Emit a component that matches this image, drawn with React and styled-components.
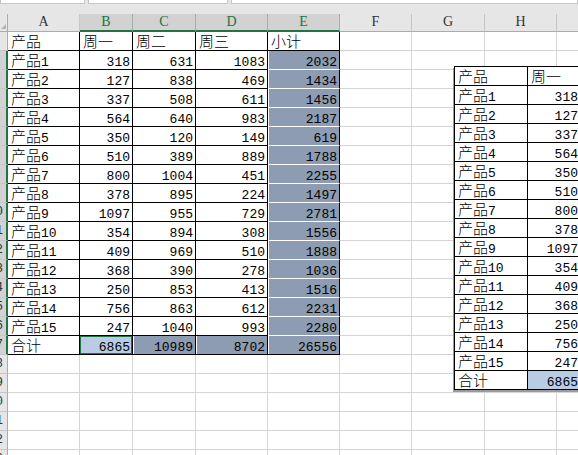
import React from 'react';
import styled, { createGlobalStyle, css } from 'styled-components';

const GREEN = '#217346';
const GRID = '#d4d4d4';
const SLATE = '#8d9cb2';
const LIGHT = '#b8cce4';

const Global = createGlobalStyle`
  html, body { margin: 0; padding: 0; background: #fff; overflow: hidden; }
  #root { width: 578px; height: 455px; }
`;

const Sheet = styled.div`
  position: relative;
  width: 578px;
  height: 455px;
  overflow: hidden;
  background: #fff;
  display: flex;
  flex-direction: column;
`;

const TopStrip = styled.div`
  height: 14px;
  flex: none;
  background: #e6e6e6;
  display: flex;
  align-items: flex-start;
  gap: 3px;
`;

const Box = styled.div`
  height: 4px;
  width: ${(p) => p.$w}px;
  flex: ${(p) => (p.$grow ? '1' : 'none')};
  background: #fff;
  border: 1px solid #c6c6c6;
  border-top: none;
  box-sizing: border-box;
`;

const Grid = styled.div`
  display: grid;
  grid-template-columns: 8px 72px 53px 63px 72px 72px 72px 73px 72px 72px;
  grid-template-rows: 18px repeat(23, 19px);
`;

const Corner = styled.div`
  background: #e6e6e6;
  border-right: 1px solid #ababab;
  border-bottom: 1px solid #ababab;
  box-sizing: border-box;
  display: flex;
  align-items: flex-end;
  justify-content: flex-end;
  padding: 0 1px 2px 0;
`;

const ColHead = styled.div`
  box-sizing: border-box;
  background: ${(p) => (p.$sel ? '#d2d2d2' : '#e6e6e6')};
  border-right: 1px solid ${(p) => (p.$sel ? '#9fb3a7' : '#c6c6c6')};
  border-bottom: ${(p) => (p.$sel ? `2px solid ${GREEN}` : '1px solid #ababab')};
  color: ${(p) => (p.$sel ? GREEN : '#333')};
  font-family: 'Liberation Serif', serif;
  font-size: 14px;
  line-height: 16px;
  display: flex;
  align-items: flex-end;
  justify-content: center;
  padding-bottom: ${(p) => (p.$sel ? 0 : 1)}px;
`;

const RowHead = styled.div`
  box-sizing: border-box;
  overflow: hidden;
  background: ${(p) => (p.$sel ? '#d2d2d2' : '#e6e6e6')};
  border-right: ${(p) => (p.$sel ? `2px solid ${GREEN}` : '1px solid #ababab')};
  border-bottom: 1px solid #c6c6c6;
  display: flex;
  align-items: flex-end;
`;

const RowNum = styled.span`
  flex: none;
  width: 25px;
  margin-left: -17px;
  text-align: center;
  font-family: 'Liberation Mono', monospace;
  font-size: 12.5px;
  line-height: 17px;
  color: #333;
`;

const Cell = styled.div`
  box-sizing: border-box;
  overflow: hidden;
  white-space: nowrap;
  display: flex;
  align-items: flex-end;
  justify-content: ${(p) => (p.$num ? 'flex-end' : 'flex-start')};
  padding: 0 2px 1px 3px;
  background: #fff;
  border-right: 1px solid ${(p) => (p.$table ? '#000' : GRID)};
  border-bottom: 1px solid ${(p) => (p.$joined ? '#fff' : p.$table ? '#000' : GRID)};
  color: #000;
  ${(p) =>
    p.$fill === 'slate' &&
    css`
      background: ${SLATE};
      box-shadow: inset 1px 0 0 #fff;
    `}
  ${(p) =>
    p.$fill === 'active' &&
    css`
      background: ${LIGHT};
      box-shadow: inset 0 0 0 1px ${GREEN};
    `}
  ${(p) =>
    p.$fill === 'light' &&
    css`
      background: ${LIGHT};
    `}
`;

const Content = styled.span`
  display: block;
  height: 16px;
  font-family: 'Noto Sans CJK SC', sans-serif;
  font-size: 15px;
  font-weight: 300;
  line-height: 16px;
`;

const Num = styled.span`
  font-family: 'Liberation Mono', monospace;
  font-size: 13px;
  font-weight: 400;
  line-height: 0;
`;

const Picture = styled.div`
  position: absolute;
  left: 454px;
  top: 66px;
  box-shadow: -1px 2px 0 #9a9a9a;
`;

const PicGrid = styled.div`
  display: grid;
  grid-template-columns: 73px 53px;
  grid-template-rows: repeat(17, 19px);
  border-top: 1px solid #000;
  border-left: 1px solid #000;
  background: #fff;
`;

const Label = ({ text }) => {
  const parts = String(text).split(/(\d+)/).filter(Boolean);
  return (
    <Content>
      {parts.map((p, i) => (/^\d+$/.test(p) ? <Num key={i}>{p}</Num> : <React.Fragment key={i}>{p}</React.Fragment>))}
    </Content>
  );
};

const data = [
  ['产品1', 318, 631, 1083, 2032],
  ['产品2', 127, 838, 469, 1434],
  ['产品3', 337, 508, 611, 1456],
  ['产品4', 564, 640, 983, 2187],
  ['产品5', 350, 120, 149, 619],
  ['产品6', 510, 389, 889, 1788],
  ['产品7', 800, 1004, 451, 2255],
  ['产品8', 378, 895, 224, 1497],
  ['产品9', 1097, 955, 729, 2781],
  ['产品10', 354, 894, 308, 1556],
  ['产品11', 409, 969, 510, 1888],
  ['产品12', 368, 390, 278, 1036],
  ['产品13', 250, 853, 413, 1516],
  ['产品14', 756, 863, 612, 2231],
  ['产品15', 247, 1040, 993, 2280],
];
const totals = ['合计', 6865, 10989, 8702, 26556];
const table = [['产品', '周一', '周二', '周三', '小计'], ...data, totals];

const letters = ['A', 'B', 'C', 'D', 'E', 'F', 'G', 'H', 'I'];

export default function App() {
  const cells = [];
  cells.push(
    <Corner key="corner">
      <svg width="5" height="5" viewBox="0 0 5 5">
        <path d="M5 0 L5 5 L0 5 Z" fill="#b4b4b4" />
      </svg>
    </Corner>
  );
  letters.forEach((l, c) => {
    cells.push(
      <ColHead key={`h${c}`} $sel={c >= 1 && c <= 4}>
        {l}
      </ColHead>
    );
  });
  for (let r = 1; r <= 23; r++) {
    cells.push(
      <RowHead key={`r${r}`} $sel={r >= 2 && r <= 17}>
        <RowNum>{r}</RowNum>
      </RowHead>
    );
    for (let c = 0; c < 9; c++) {
      const inTable = r <= 17 && c <= 4;
      const v = inTable ? table[r - 1][c] : null;
      let fill = null;
      if (c === 4 && r >= 2 && r <= 16) fill = 'slate';
      if (r === 17 && c === 1) fill = 'active';
      if (r === 17 && c >= 2 && c <= 4) fill = 'slate';
      const isNum = typeof v === 'number';
      cells.push(
        <Cell key={`${r}-${c}`} $table={inTable} $num={isNum} $fill={fill} $joined={c === 4 && r >= 2 && r <= 16}>
          {v !== null &&
            (isNum ? (
              <Content>
                <Num>{v}</Num>
              </Content>
            ) : (
              <Label text={v} />
            ))}
        </Cell>
      );
    }
  }

  const pic = [];
  table.forEach((row, i) => {
    const name = row[0];
    const mon = row[1];
    const isNum = typeof mon === 'number';
    pic.push(
      <Cell key={`p${i}a`} $table>
        <Label text={name} />
      </Cell>
    );
    pic.push(
      <Cell key={`p${i}b`} $table $num={isNum} $fill={i === 16 ? 'light' : null}>
        {isNum ? (
          <Content>
            <Num>{mon}</Num>
          </Content>
        ) : (
          <Label text={mon} />
        )}
      </Cell>
    );
  });

  return (
    <>
      <Global />
      <Sheet>
        <TopStrip>
          <Box $w={85} />
          <Box $w={140} />
          <Box $grow />
        </TopStrip>
        <Grid>{cells}</Grid>
        <Picture>
          <PicGrid>{pic}</PicGrid>
        </Picture>
      </Sheet>
    </>
  );
}
